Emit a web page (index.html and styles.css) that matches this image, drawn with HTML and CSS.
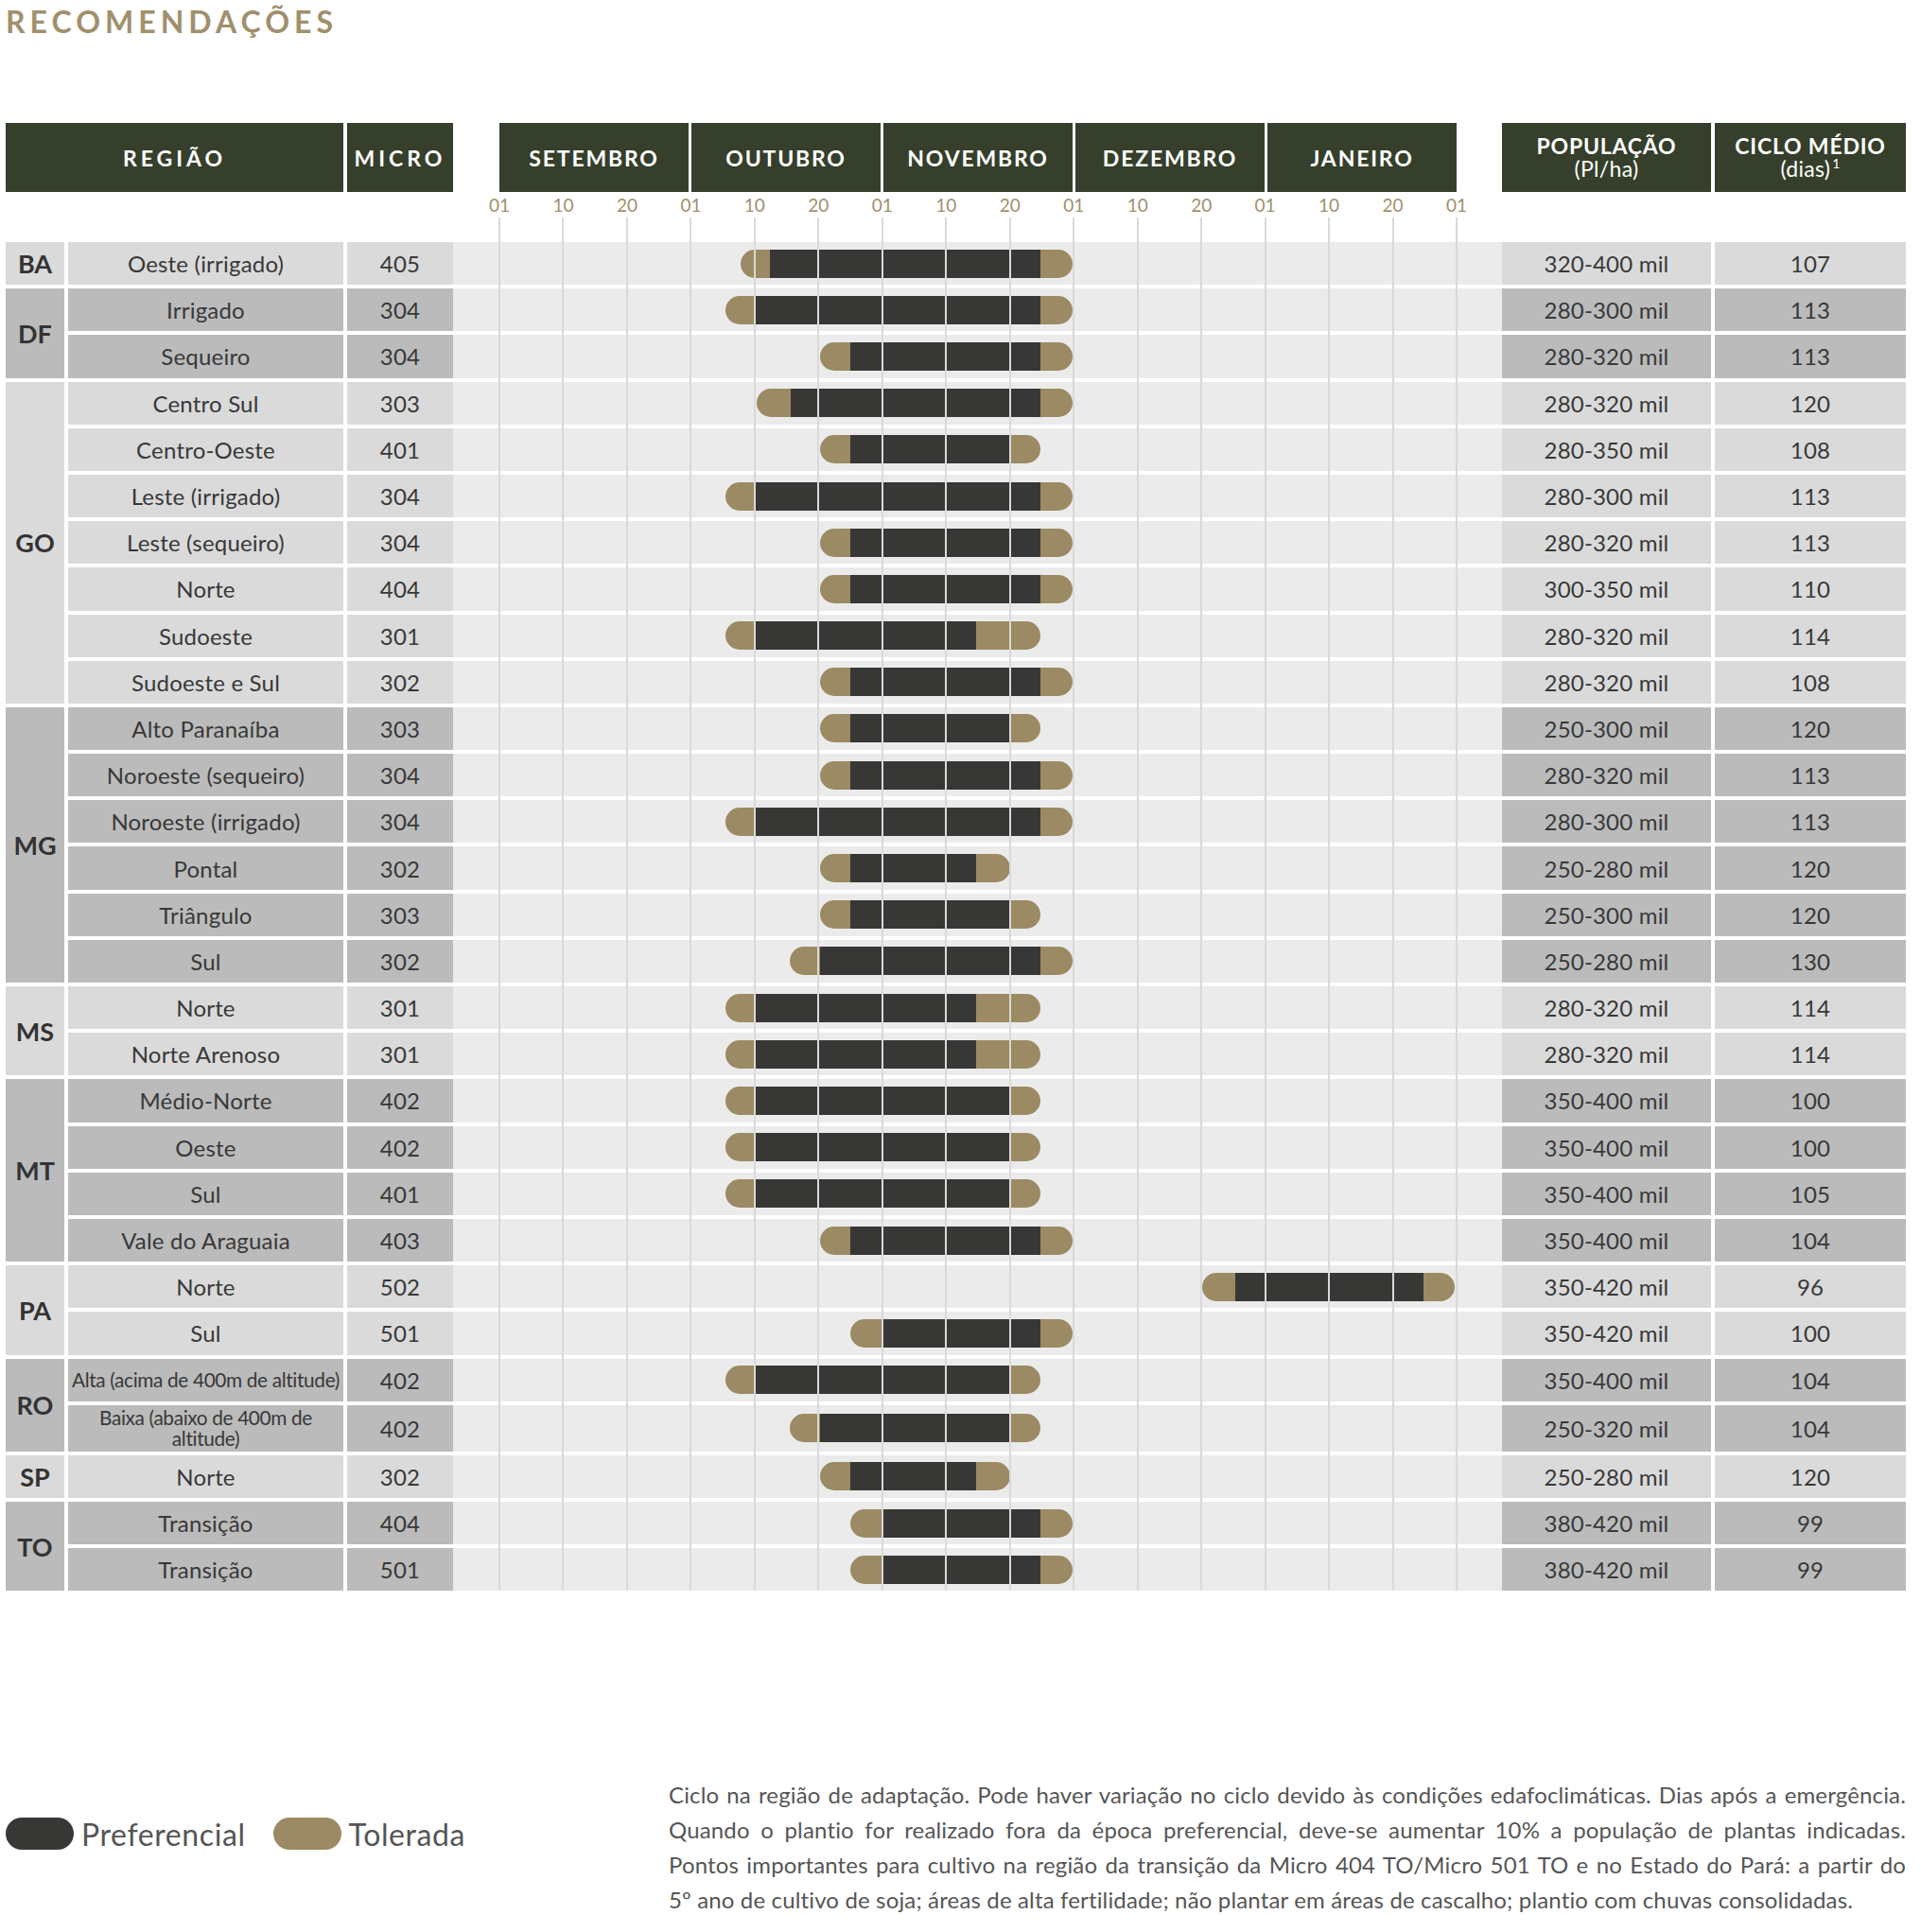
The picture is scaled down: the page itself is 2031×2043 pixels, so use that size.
FILE: index.html
```html
<!DOCTYPE html>
<html lang="pt-BR">
<head>
<meta charset="utf-8">
<title>Recomendações</title>
<link rel="stylesheet" href="styles.css">
</head>
<body>
<div class="page">
  <h1 class="title">RECOMENDAÇÕES</h1>
  <div class="table">
    <div class="head">
      <div class="hcell h-regiao">REGIÃO</div>
      <div class="hcell h-micro">MICRO</div>
      <div class="months">
        <div class="hcell month">SETEMBRO</div>
        <div class="hcell month">OUTUBRO</div>
        <div class="hcell month">NOVEMBRO</div>
        <div class="hcell month">DEZEMBRO</div>
        <div class="hcell month">JANEIRO</div>
      </div>
      <div class="hcell h-pop"><span class="h-main">POPULAÇÃO</span><span class="h-sub">(Pl/ha)</span></div>
      <div class="hcell h-ciclo"><span class="h-main">CICLO MÉDIO</span><span class="h-sub">(dias)<sup>1</sup></span></div>
    </div>
    <div class="axis">
      <div class="ticks">
        <span>01</span><span>10</span><span>20</span>
        <span>01</span><span>10</span><span>20</span>
        <span>01</span><span>10</span><span>20</span>
        <span>01</span><span>10</span><span>20</span>
        <span>01</span><span>10</span><span>20</span>
        <span>01</span>
      </div>
    </div>
    <div class="body">
      <div class="group light">
        <div class="state">BA</div>
        <div class="rows">
          <div class="row"><div class="cell region">Oeste (irrigado)</div><div class="cell micro">405</div><div class="chart"><div class="track"><div class="bar" style="--s:255;--a:286;--b:572;--e:606"></div></div></div><div class="cell pop">320-400 mil</div><div class="cell ciclo">107</div></div>
        </div>
      </div>
      <div class="group dark">
        <div class="state">DF</div>
        <div class="rows">
          <div class="row"><div class="cell region">Irrigado</div><div class="cell micro">304</div><div class="chart"><div class="track"><div class="bar" style="--s:239;--a:270;--b:572;--e:606"></div></div></div><div class="cell pop">280-300 mil</div><div class="cell ciclo">113</div></div>
          <div class="row"><div class="cell region">Sequeiro</div><div class="cell micro">304</div><div class="chart"><div class="track"><div class="bar" style="--s:339;--a:371;--b:572;--e:606"></div></div></div><div class="cell pop">280-320 mil</div><div class="cell ciclo">113</div></div>
        </div>
      </div>
      <div class="group light">
        <div class="state">GO</div>
        <div class="rows">
          <div class="row"><div class="cell region">Centro Sul</div><div class="cell micro">303</div><div class="chart"><div class="track"><div class="bar" style="--s:272;--a:308;--b:572;--e:606"></div></div></div><div class="cell pop">280-320 mil</div><div class="cell ciclo">120</div></div>
          <div class="row"><div class="cell region">Centro-Oeste</div><div class="cell micro">401</div><div class="chart"><div class="track"><div class="bar" style="--s:339;--a:371;--b:540;--e:572"></div></div></div><div class="cell pop">280-350 mil</div><div class="cell ciclo">108</div></div>
          <div class="row"><div class="cell region">Leste (irrigado)</div><div class="cell micro">304</div><div class="chart"><div class="track"><div class="bar" style="--s:239;--a:270;--b:572;--e:606"></div></div></div><div class="cell pop">280-300 mil</div><div class="cell ciclo">113</div></div>
          <div class="row"><div class="cell region">Leste (sequeiro)</div><div class="cell micro">304</div><div class="chart"><div class="track"><div class="bar" style="--s:339;--a:371;--b:572;--e:606"></div></div></div><div class="cell pop">280-320 mil</div><div class="cell ciclo">113</div></div>
          <div class="row"><div class="cell region">Norte</div><div class="cell micro">404</div><div class="chart"><div class="track"><div class="bar" style="--s:339;--a:371;--b:572;--e:606"></div></div></div><div class="cell pop">300-350 mil</div><div class="cell ciclo">110</div></div>
          <div class="row"><div class="cell region">Sudoeste</div><div class="cell micro">301</div><div class="chart"><div class="track"><div class="bar" style="--s:239;--a:270;--b:504;--e:572"></div></div></div><div class="cell pop">280-320 mil</div><div class="cell ciclo">114</div></div>
          <div class="row"><div class="cell region">Sudoeste e Sul</div><div class="cell micro">302</div><div class="chart"><div class="track"><div class="bar" style="--s:339;--a:371;--b:572;--e:606"></div></div></div><div class="cell pop">280-320 mil</div><div class="cell ciclo">108</div></div>
        </div>
      </div>
      <div class="group dark">
        <div class="state">MG</div>
        <div class="rows">
          <div class="row"><div class="cell region">Alto Paranaíba</div><div class="cell micro">303</div><div class="chart"><div class="track"><div class="bar" style="--s:339;--a:371;--b:540;--e:572"></div></div></div><div class="cell pop">250-300 mil</div><div class="cell ciclo">120</div></div>
          <div class="row"><div class="cell region">Noroeste (sequeiro)</div><div class="cell micro">304</div><div class="chart"><div class="track"><div class="bar" style="--s:339;--a:371;--b:572;--e:606"></div></div></div><div class="cell pop">280-320 mil</div><div class="cell ciclo">113</div></div>
          <div class="row"><div class="cell region">Noroeste (irrigado)</div><div class="cell micro">304</div><div class="chart"><div class="track"><div class="bar" style="--s:239;--a:270;--b:572;--e:606"></div></div></div><div class="cell pop">280-300 mil</div><div class="cell ciclo">113</div></div>
          <div class="row"><div class="cell region">Pontal</div><div class="cell micro">302</div><div class="chart"><div class="track"><div class="bar" style="--s:339;--a:371;--b:504;--e:540"></div></div></div><div class="cell pop">250-280 mil</div><div class="cell ciclo">120</div></div>
          <div class="row"><div class="cell region">Triângulo</div><div class="cell micro">303</div><div class="chart"><div class="track"><div class="bar" style="--s:339;--a:371;--b:540;--e:572"></div></div></div><div class="cell pop">250-300 mil</div><div class="cell ciclo">120</div></div>
          <div class="row"><div class="cell region">Sul</div><div class="cell micro">302</div><div class="chart"><div class="track"><div class="bar" style="--s:307;--a:339;--b:572;--e:606"></div></div></div><div class="cell pop">250-280 mil</div><div class="cell ciclo">130</div></div>
        </div>
      </div>
      <div class="group light">
        <div class="state">MS</div>
        <div class="rows">
          <div class="row"><div class="cell region">Norte</div><div class="cell micro">301</div><div class="chart"><div class="track"><div class="bar" style="--s:239;--a:270;--b:504;--e:572"></div></div></div><div class="cell pop">280-320 mil</div><div class="cell ciclo">114</div></div>
          <div class="row"><div class="cell region">Norte Arenoso</div><div class="cell micro">301</div><div class="chart"><div class="track"><div class="bar" style="--s:239;--a:270;--b:504;--e:572"></div></div></div><div class="cell pop">280-320 mil</div><div class="cell ciclo">114</div></div>
        </div>
      </div>
      <div class="group dark">
        <div class="state">MT</div>
        <div class="rows">
          <div class="row"><div class="cell region">Médio-Norte</div><div class="cell micro">402</div><div class="chart"><div class="track"><div class="bar" style="--s:239;--a:270;--b:540;--e:572"></div></div></div><div class="cell pop">350-400 mil</div><div class="cell ciclo">100</div></div>
          <div class="row"><div class="cell region">Oeste</div><div class="cell micro">402</div><div class="chart"><div class="track"><div class="bar" style="--s:239;--a:270;--b:540;--e:572"></div></div></div><div class="cell pop">350-400 mil</div><div class="cell ciclo">100</div></div>
          <div class="row"><div class="cell region">Sul</div><div class="cell micro">401</div><div class="chart"><div class="track"><div class="bar" style="--s:239;--a:270;--b:540;--e:572"></div></div></div><div class="cell pop">350-400 mil</div><div class="cell ciclo">105</div></div>
          <div class="row"><div class="cell region">Vale do Araguaia</div><div class="cell micro">403</div><div class="chart"><div class="track"><div class="bar" style="--s:339;--a:371;--b:572;--e:606"></div></div></div><div class="cell pop">350-400 mil</div><div class="cell ciclo">104</div></div>
        </div>
      </div>
      <div class="group light">
        <div class="state">PA</div>
        <div class="rows">
          <div class="row"><div class="cell region">Norte</div><div class="cell micro">502</div><div class="chart"><div class="track"><div class="bar" style="--s:743;--a:778;--b:977;--e:1010"></div></div></div><div class="cell pop">350-420 mil</div><div class="cell ciclo">96</div></div>
          <div class="row"><div class="cell region">Sul</div><div class="cell micro">501</div><div class="chart"><div class="track"><div class="bar" style="--s:371;--a:405;--b:572;--e:606"></div></div></div><div class="cell pop">350-420 mil</div><div class="cell ciclo">100</div></div>
        </div>
      </div>
      <div class="group dark">
        <div class="state">RO</div>
        <div class="rows">
          <div class="row"><div class="cell region small nowrap">Alta (acima de 400m de altitude)</div><div class="cell micro">402</div><div class="chart"><div class="track"><div class="bar" style="--s:239;--a:270;--b:540;--e:572"></div></div></div><div class="cell pop">350-400 mil</div><div class="cell ciclo">104</div></div>
          <div class="row tall"><div class="cell region small">Baixa (abaixo de 400m de<br>altitude)</div><div class="cell micro">402</div><div class="chart"><div class="track"><div class="bar" style="--s:307;--a:339;--b:540;--e:572"></div></div></div><div class="cell pop">250-320 mil</div><div class="cell ciclo">104</div></div>
        </div>
      </div>
      <div class="group light">
        <div class="state">SP</div>
        <div class="rows">
          <div class="row"><div class="cell region">Norte</div><div class="cell micro">302</div><div class="chart"><div class="track"><div class="bar" style="--s:339;--a:371;--b:504;--e:540"></div></div></div><div class="cell pop">250-280 mil</div><div class="cell ciclo">120</div></div>
        </div>
      </div>
      <div class="group dark">
        <div class="state">TO</div>
        <div class="rows">
          <div class="row"><div class="cell region">Transição</div><div class="cell micro">404</div><div class="chart"><div class="track"><div class="bar" style="--s:371;--a:405;--b:572;--e:606"></div></div></div><div class="cell pop">380-420 mil</div><div class="cell ciclo">99</div></div>
          <div class="row"><div class="cell region">Transição</div><div class="cell micro">501</div><div class="chart"><div class="track"><div class="bar" style="--s:371;--a:405;--b:572;--e:606"></div></div></div><div class="cell pop">380-420 mil</div><div class="cell ciclo">99</div></div>
        </div>
      </div>
    </div>
    <div class="gridlines"></div>
  </div>
  <div class="footer">
    <div class="legend">
      <span class="pill pill-dark"></span><span class="legend-label">Preferencial</span>
      <span class="pill pill-tan"></span><span class="legend-label">Tolerada</span>
    </div>
    <div class="notes">
      <p class="line">Ciclo na região de adaptação. Pode haver variação no ciclo devido às condições edafoclimáticas. Dias após a emergência.</p>
      <p class="line">Quando o plantio for realizado fora da época preferencial, deve-se aumentar 10% a população de plantas indicadas.</p>
      <p class="line">Pontos importantes para cultivo na região da transição da Micro 404 TO/Micro 501 TO e no Estado do Pará: a partir do</p>
      <p class="line last">5º ano de cultivo de soja; áreas de alta fertilidade; não plantar em áreas de cascalho; plantio com chuvas consolidadas.</p>
    </div>
  </div>
</div>
</body>
</html>
```

FILE: styles.css
```css
:root {
  --tan: #9b8a63;
  --dark: #373735;
  --olive: #353f2b;
  --gold: #a0906c;
}

* { box-sizing: border-box; }

html, body {
  margin: 0;
  padding: 0;
  background: #ffffff;
}

body {
  font-family: Lato, "Open Sans", sans-serif;
  color: #383838;
}

.page {
  width: 2031px;
  padding: 0 16px 0 6px;
}

.title {
  margin: 0;
  height: 130px;
  padding-top: 4px;
  font-size: 32px;
  line-height: 38px;
  font-weight: 700;
  letter-spacing: 5px;
  color: var(--gold);
}

.table {
  position: relative;
}

/* header */
.head {
  display: flex;
  height: 73px;
}

.hcell {
  background: var(--olive);
  color: #ffffff;
  font-weight: 700;
  font-size: 23px;
  display: flex;
  flex-direction: column;
  align-items: center;
  justify-content: center;
}

.h-regiao {
  width: 357px;
  letter-spacing: 4px;
}

.h-micro {
  width: 112px;
  margin-left: 4px;
  letter-spacing: 4px;
}

.months {
  display: flex;
  gap: 3px;
  width: 1012px;
  margin-left: 49px;
}

.month {
  flex: 1;
  letter-spacing: 1.8px;
}

.h-pop {
  width: 221px;
  margin-left: 48px;
}

.h-ciclo {
  width: 202px;
  margin-left: 4px;
}

.h-main {
  line-height: 26px;
  letter-spacing: 0.8px;
}

.h-sub {
  font-weight: 400;
  line-height: 22px;
  margin-bottom: 4px;
  letter-spacing: 0.3px;
}

.h-sub sup {
  font-size: 14px;
  line-height: 0;
  vertical-align: 9px;
  margin-left: 2px;
}

/* axis */
.axis {
  height: 53px;
}

.ticks {
  display: flex;
  margin-left: 488.27px;
  width: 1079.47px;
  padding-top: 2px;
}

.ticks span {
  flex: 1;
  text-align: center;
  font-size: 19px;
  line-height: 23px;
  color: var(--gold);
}

/* body */
.body {
  display: flex;
  flex-direction: column;
  gap: 4px;
}

.group {
  display: flex;
  gap: 4px;
}

.state {
  width: 62px;
  display: flex;
  align-items: center;
  justify-content: center;
  font-weight: 700;
  font-size: 27px;
  color: #333333;
}

.rows {
  display: flex;
  flex-direction: column;
  gap: 4px;
}

.row {
  display: flex;
  height: 45.2px;
}

.row.tall {
  height: 49.2px;
}

.cell {
  display: flex;
  align-items: center;
  justify-content: center;
  text-align: center;
  font-size: 24px;
  letter-spacing: 0.2px;
}

.region { width: 291px; }

.region.small {
  font-size: 20.8px;
  line-height: 22px;
  letter-spacing: -0.35px;
}

.nowrap { white-space: nowrap; }

.micro {
  width: 112px;
  margin-left: 4px;
}

.chart {
  width: 1109px;
  background: #ebebeb;
}

.track {
  position: relative;
  margin-left: 49px;
  width: 1012px;
  height: 100%;
}

.pop { width: 221px; }

.ciclo {
  width: 202px;
  margin-left: 4px;
}

.light .state,
.light .cell { background: #dadada; }

.dark .state,
.dark .cell { background: #bbbbbb; }

.bar {
  position: absolute;
  top: calc(50% - 15px);
  height: 30px;
  border-radius: 15px;
  left: calc(var(--s) * 1px);
  width: calc((var(--e) - var(--s)) * 1px);
  background: linear-gradient(90deg,
    var(--tan) 0 calc((var(--a) - var(--s)) * 1px),
    var(--dark) 0 calc((var(--b) - var(--s)) * 1px),
    var(--tan) 0);
}

.gridlines {
  position: absolute;
  left: 521px;
  width: 1014px;
  top: 100px;
  bottom: 0;
  background: repeating-linear-gradient(90deg, #d9d9d9 0 2px, transparent 2px 67.467px);
  pointer-events: none;
  z-index: 2;
}

/* footer */
.footer {
  display: flex;
  align-items: flex-start;
  margin-top: 197px;
}

.legend {
  display: flex;
  align-items: center;
  margin-top: 43px;
  height: 34px;
}

.pill {
  width: 72px;
  height: 34px;
  border-radius: 17px;
}

.pill-dark { background: var(--dark); }

.pill-tan {
  background: var(--tan);
  margin-left: 29px;
}

.legend-label {
  margin-left: 8px;
  font-size: 32px;
  letter-spacing: 0.6px;
  color: #555555;
}

.notes {
  margin-left: auto;
  width: 1308px;
}

.line {
  margin: 0;
  font-size: 24px;
  line-height: 37px;
  letter-spacing: 0.15px;
  color: #555555;
  text-align: justify;
  text-align-last: justify;
}

.line.last {
  text-align-last: left;
}
```
